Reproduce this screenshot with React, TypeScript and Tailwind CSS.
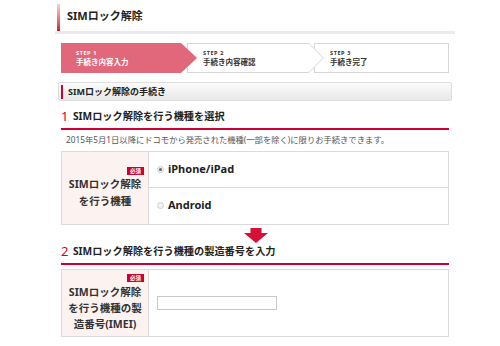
import React from 'react';

const RED = 'bg-[#cc0033]';

function Step({ n, label, active, arrow, width }: { n: number; label: string; active?: boolean; arrow?: boolean; width: string }) {
    return (
        <div
            className={`relative h-[30px] flex flex-col justify-center pl-[15px] ${width} ${
                active
                    ? 'bg-[#e1677b] text-white'
                    : arrow
                    ? 'bg-white border border-r-0 border-[#d6d6d6] text-[#333]'
                    : 'bg-white border border-[#d6d6d6] text-[#333]'
            }`}
        >
            <span className="text-[5.5px] leading-[8px] tracking-[0.6px] font-bold">STEP {n}</span>
            <span className="text-[7.5px] leading-[10px] font-bold">{label}</span>
            {arrow && active && (
                <svg className="absolute left-full top-0 z-10" width="16" height="30" viewBox="0 0 16 30">
                    <polygon points="0,0 16,15 0,30" fill="#e1677b" />
                </svg>
            )}
            {arrow && !active && (
                <svg className="absolute left-full top-[-1px] z-10" width="15" height="30" viewBox="0 0 15 30">
                    <polygon points="0,0 14.5,15 0,30" fill="#fff" />
                    <polyline points="0,0.5 14.3,15 0,29.5" fill="none" stroke="#d6d6d6" strokeWidth="1" />
                </svg>
            )}
        </div>
    );
}

function Badge() {
    return (
        <span className={`self-end mr-[4px] w-[17px] h-[8px] ${RED} text-white text-[5.5px] leading-[8px] font-bold flex items-center justify-center`}>
            必須
        </span>
    );
}

function Heading({ num, text }: { num: string; text: string }) {
    return (
        <div className="flex items-center gap-[5px] h-[16px] box-content pb-[4px] border-b-2 border-[#cc0033]">
            <span className="text-[13px] leading-[16px] text-[#cc0033] w-[7px]">{num}</span>
            <span className="text-[10.2px] leading-[16px] font-bold text-[#222]">{text}</span>
        </div>
    );
}

function Radio({ checked, label }: { checked?: boolean; label: string }) {
    return (
        <div className="flex items-center pl-[8px]">
            <span className="w-[7px] h-[7px] rounded-full border border-[#cfcfcf] bg-[#f2f2f2] flex items-center justify-center">
                {checked && <span className="w-[3px] h-[3px] rounded-full bg-[#666]" />}
            </span>
            <span className="ml-[4px] text-[11px] leading-[14px] font-bold text-[#222]">{label}</span>
        </div>
    );
}

export default function App() {
    return (
        <div className="w-[500px] h-[346px] bg-white overflow-hidden font-['Noto_Sans','Noto_Sans_CJK_JP',sans-serif]">
            <div className="ml-[55px] w-[400px]">
                {/* タイトル */}
                <div className="h-[34px] pt-[4px] flex border-b-[3px] border-[#ebebeb]">
                    <div className="ml-[2px] w-[3px] bg-linear-to-b from-[#f6d0d7] to-[#cc1038]" />
                    <div className="ml-[7px] flex items-center pb-[2px] text-[11px] font-bold text-[#222]">SIMロック解除</div>
                </div>

                {/* ステップ */}
                <div className="mt-[9px] px-[6px] flex">
                    <Step n={1} label="手続き内容入力" active arrow width="w-[120px]" />
                    <div className="ml-[6px]">
                        <Step n={2} label="手続き内容確認" arrow width="w-[122px]" />
                    </div>
                    <div className="ml-[5px]">
                        <Step n={3} label="手続き完了" width="w-[135px]" />
                    </div>
                </div>

                {/* セクション見出し */}
                <div className="mt-[9px] mx-[3px] h-[19px] flex items-center rounded-[2px] border border-[#dedede] bg-linear-to-b from-[#fbfbfb] to-[#e8e8e8]">
                    <div className="ml-[2px] w-[2px] h-[14px] bg-[#cc0033]" />
                    <span className="ml-[5px] text-[9px] font-bold text-[#222]">SIMロック解除の手続き</span>
                </div>

                <div className="px-[6px]">
                    <div className="mt-[7px]">
                        <Heading num="1" text="SIMロック解除を行う機種を選択" />
                    </div>
                    <p className="mt-[4px] pl-[5px] text-[8.3px] leading-[12px] text-[#555]">
                        2015年5月1日以降にドコモから発売された機種(一部を除く)に限りお手続きできます。
                    </p>

                    <div className="mt-[5px] flex border border-[#dcdcdc]">
                        <div className="w-[87px] bg-[#fcf2f0] border-r border-[#dcdcdc] flex flex-col items-center justify-center">
                            <Badge />
                            <div className="mt-[1px] text-center text-[10.5px] leading-[17px] font-bold text-[#333]">
                                SIMロック解除
                                <br />
                                を行う機種
                            </div>
                        </div>
                        <div className="flex-1 flex flex-col">
                            <div className="h-[36px] flex items-center pb-[1px] border-b border-[#dcdcdc]">
                                <Radio checked label="iPhone/iPad" />
                            </div>
                            <div className="h-[36px] flex items-center pb-[2px]">
                                <Radio label="Android" />
                            </div>
                        </div>
                    </div>

                    {/* 矢印 */}
                    <div className="h-[18px] pt-[3px] flex justify-center">
                        <svg width="24" height="15" viewBox="0 0 24 15" className="ml-[2px]">
                            <polygon points="6.5,0 17.5,0 17.5,5 24,5 12,15 0,5 6.5,5" fill="#d50f35" />
                        </svg>
                    </div>

                    <Heading num="2" text="SIMロック解除を行う機種の製造番号を入力" />

                    <div className="mt-[4px] flex border border-[#dcdcdc]">
                        <div className="w-[87px] h-[66px] bg-[#fcf2f0] border-r border-[#dcdcdc] flex flex-col items-center justify-center">
                            <Badge />
                            <div className="mt-[2px] text-center text-[10.5px] leading-[16px] font-bold text-[#333]">
                                SIMロック解除
                                <br />
                                を行う機種の製
                                <br />
                                造番号(IMEI)
                            </div>
                        </div>
                        <div className="flex-1 flex items-center pl-[8px]">
                            <input type="text" className="w-[120px] h-[14px] border border-[#c8c8c8] bg-white outline-none" />
                        </div>
                    </div>
                </div>
            </div>
        </div>
    );
}
